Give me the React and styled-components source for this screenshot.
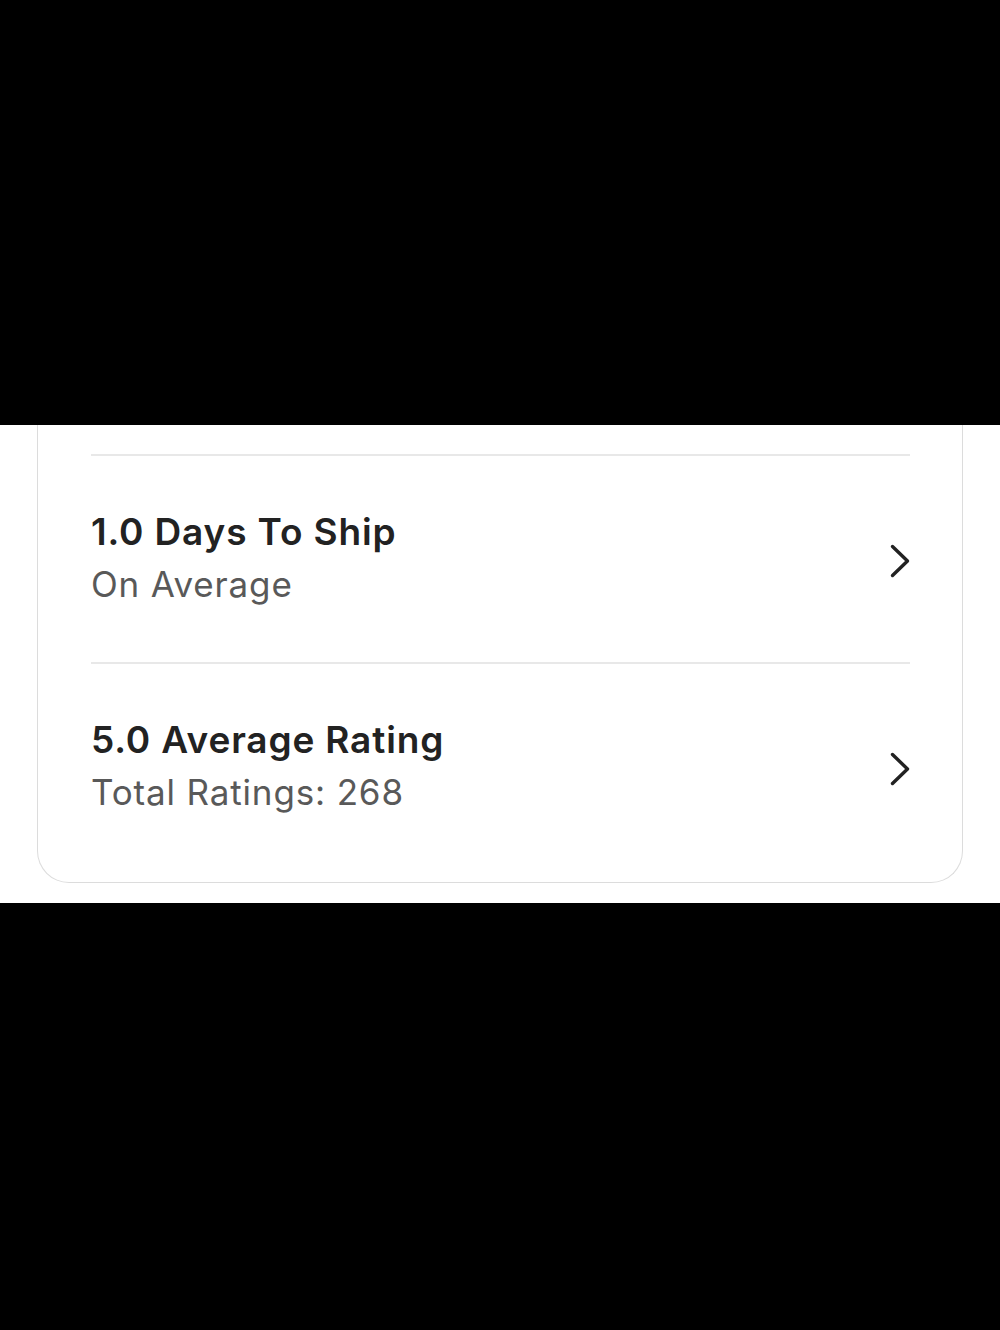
import React from "react";
import styled, { createGlobalStyle } from "styled-components";

const Global = createGlobalStyle`
  html, body { margin: 0; padding: 0; background: #000; }
  body { font-family: Inter, "Noto Sans", sans-serif; -webkit-font-smoothing: antialiased; }
`;

const Screen = styled.div`
  width: 1000px;
  height: 1330px;
  background: #000;
  display: flex;
  flex-direction: column;
  padding-top: 425px;
  box-sizing: border-box;
`;

const Band = styled.section`
  background: #fff;
  height: 478px;
  padding: 0 37px;
  box-sizing: border-box;
`;

const Card = styled.div`
  height: 458px;
  box-sizing: border-box;
  border: 1.5px solid #dcdcdc;
  border-top: none;
  border-radius: 0 0 32px 32px;
  padding: 29px 52px 0 53px;
  display: flex;
  flex-direction: column;
`;

const Divider = styled.hr`
  margin: 0;
  border: none;
  height: 2px;
  background: #e8e8e8;
`;

const Row = styled.div`
  display: flex;
  align-items: center;
  justify-content: space-between;
  padding: 51px 0 53px;
`;

const Texts = styled.div`
  display: flex;
  flex-direction: column;
  gap: 2px;
`;

const Title = styled.div`
  font-size: 37px;
  line-height: 50px;
  font-weight: 600;
  color: #222;
  letter-spacing: 0.85px;
`;

const Sub = styled.div`
  font-size: 35px;
  line-height: 50px;
  font-weight: 400;
  color: #595959;
  letter-spacing: 0.85px;
`;

const ChevronIcon = styled.svg`
  flex: none;
  margin-top: 6px;
`;

const Chevron = () => (
  <ChevronIcon width="20" height="34" viewBox="0 0 20 34" fill="none">
    <path d="M2.5 2.5 L17.5 17 L2.5 31.5" stroke="#222" strokeWidth="3.4" strokeLinecap="round" strokeLinejoin="round" />
  </ChevronIcon>
);

const items = [
  { title: "1.0 Days To Ship", sub: "On Average" },
  { title: "5.0 Average Rating", sub: "Total Ratings: 268" },
];

export default function App() {
  return (
    <>
      <Global />
      <Screen>
        <Band>
          <Card>
            {items.map((it) => (
              <React.Fragment key={it.title}>
                <Divider />
                <Row>
                  <Texts>
                    <Title>{it.title}</Title>
                    <Sub>{it.sub}</Sub>
                  </Texts>
                  <Chevron />
                </Row>
              </React.Fragment>
            ))}
          </Card>
        </Band>
      </Screen>
    </>
  );
}
